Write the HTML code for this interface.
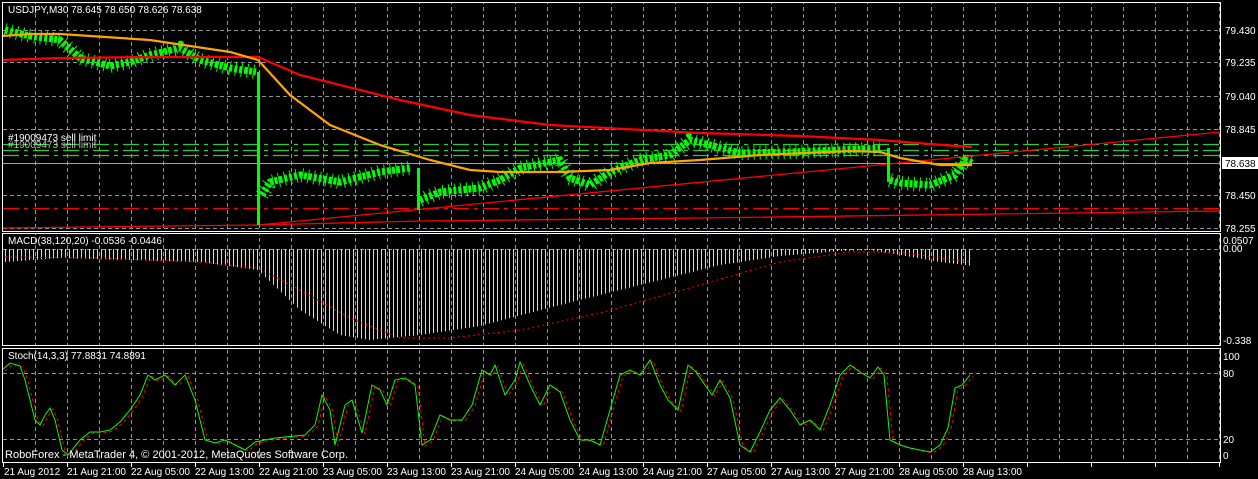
<!DOCTYPE html>
<html><head><meta charset="utf-8">
<style>
html,body{margin:0;padding:0;background:#000;width:1258px;height:479px;overflow:hidden}
svg{display:block}
text{font-family:"Liberation Sans",sans-serif;font-size:10px;fill:#fff}
</style></head>
<body>
<svg width="1258" height="479" xmlns="http://www.w3.org/2000/svg">
<defs>
<pattern id="vg" x="3" y="0" width="32" height="7" patternUnits="userSpaceOnUse">
<rect x="0" y="0" width="1" height="4" fill="#8a93a3"/>
</pattern>
<pattern id="tk" x="3" y="0" width="64" height="10" patternUnits="userSpaceOnUse">
<rect x="0" y="0" width="1" height="10" fill="#fff"/>
</pattern>
<pattern id="mb" x="5" y="0" width="4" height="10" patternUnits="userSpaceOnUse">
<rect x="0" y="0" width="1" height="10" fill="#d8d8d8"/>
</pattern>
</defs>
<rect x="4" y="3" width="1216" height="228" fill="url(#vg)"/>
<rect x="4" y="234" width="1216" height="112" fill="url(#vg)"/>
<rect x="4" y="349" width="1216" height="113" fill="url(#vg)"/>
<g stroke="#8a93a3" stroke-dasharray="4,3">
<line x1="3" y1="30.5" x2="1220" y2="30.5"/><line x1="3" y1="62.5" x2="1220" y2="62.5"/>
<line x1="3" y1="96.5" x2="1220" y2="96.5"/><line x1="3" y1="129.5" x2="1220" y2="129.5"/>
<line x1="3" y1="195.5" x2="1220" y2="195.5"/><line x1="3" y1="228.5" x2="1220" y2="228.5"/>
<line x1="3" y1="249.5" x2="1220" y2="249.5"/>
<line x1="3" y1="373.5" x2="1220" y2="373.5"/><line x1="3" y1="439.5" x2="1220" y2="439.5"/>
</g>
<line x1="3" y1="163.5" x2="1220" y2="163.5" stroke="#9aa3b3"/>
<g stroke="#2ecc2e" stroke-width="1.2" stroke-dasharray="16,5,4,5">
<line x1="3" y1="144.5" x2="1220" y2="144.5"/><line x1="3" y1="150.5" x2="1220" y2="150.5"/><line x1="3" y1="155.5" x2="1220" y2="155.5"/>
</g>
<line x1="3" y1="208.5" x2="1220" y2="208.5" stroke="#f00" stroke-width="1.3" stroke-dasharray="16,5,4,5"/>
<polyline fill="none" stroke="#f00" stroke-width="1.3" points="258,225 1220,132"/>
<polyline fill="none" stroke="#f00" stroke-width="1.3" points="2,228 258,225 420,221 700,218 1220,211"/>
<path fill="none" stroke="#00ff00" stroke-width="14" stroke-dasharray="1,5" d="M5 30L30 36L60 40L80 58L110 66L130 62L150 55L180 48L200 60L230 68L256 72M262 195L270 182L300 175L340 182L380 172L410 168M420 200L440 192L480 188L500 180L520 168L560 160L570 178L590 185L610 172L640 160L670 155L690 140L710 145L740 153L790 152L840 150L880 148M890 180L900 183L930 185L955 175L965 160L972 163"/>
<path fill="none" stroke="#00ff00" stroke-width="7" stroke-dasharray="3,2" d="M5 30L30 36L60 40L80 58L110 66L130 62L150 55L180 48L200 60L230 68L256 72M262 195L270 182L300 175L340 182L380 172L410 168M420 200L440 192L480 188L500 180L520 168L560 160L570 178L590 185L610 172L640 160L670 155L690 140L710 145L740 153L790 152L840 150L880 148M890 180L900 183L930 185L955 175L965 160L972 163"/>
<line x1="258.5" y1="72" x2="258.5" y2="225" stroke="#00ff00" stroke-width="3"/>
<line x1="888.5" y1="148" x2="888.5" y2="182" stroke="#00ff00" stroke-width="3"/>
<line x1="418.5" y1="168" x2="418.5" y2="210" stroke="#00ff00" stroke-width="3"/>
<polyline fill="none" stroke="#f00" stroke-width="2.2" points="2,60 60,58 150,57 258,57 300,75 400,100 470,115 550,125 700,133 800,136 880,140 930,144 972,147"/>
<polyline fill="none" stroke="#ffa500" stroke-width="2.2" points="2,36 30,34 60,34 150,40 230,52 258,60 290,95 330,125 380,145 430,160 470,170 500,172 560,172 610,170 650,163 700,160 760,155 850,151 880,152 900,158 940,165 972,165"/>
<polygon fill="url(#mb)" points="5,249 5,262 60,258 200,262 258,270 300,310 340,335 370,340 420,335 480,326 560,305 640,285 720,265 780,256 840,251 870,250 900,255 940,262 973,266 973,249"/>
<polyline fill="none" stroke="#f00" stroke-width="1" stroke-dasharray="2,3" points="5,257 100,258 200,262 258,268 300,290 350,318 400,338 450,338 520,330 600,313 700,285 780,262 850,252 900,252 940,258 972,262"/>
<polyline transform="translate(3,1)" fill="none" stroke="#f00" stroke-width="1" stroke-dasharray="3,3" points="2,370 10,363 20,366 25,380 35,420 40,425 45,415 50,408 55,420 62,450 68,455 80,440 90,432 100,432 110,430 120,422 130,410 140,395 148,375 155,380 165,375 175,385 185,375 195,400 205,440 215,443 225,440 235,445 245,450 255,442 265,440 275,438 285,437 305,435 315,425 322,395 330,410 335,445 345,405 352,400 362,433 372,385 380,390 387,405 395,380 405,378 415,385 422,445 430,440 440,415 450,420 462,420 472,405 482,370 490,375 495,365 505,395 515,380 520,362 530,385 540,405 550,385 560,392 570,420 580,440 590,440 600,445 610,410 620,375 630,370 640,375 650,360 660,385 668,400 678,410 688,365 696,372 705,385 712,395 720,380 730,398 740,445 750,452 760,432 770,410 780,398 790,410 800,425 810,420 820,430 830,405 840,375 850,365 860,372 870,378 878,367 884,375 890,440 900,445 910,448 920,450 930,452 940,445 948,428 955,388 962,385 970,375"/>
<polyline fill="none" stroke="#00ff00" stroke-width="1" points="2,370 10,363 20,366 25,380 35,420 40,425 45,415 50,408 55,420 62,450 68,455 80,440 90,432 100,432 110,430 120,422 130,410 140,395 148,375 155,380 165,375 175,385 185,375 195,400 205,440 215,443 225,440 235,445 245,450 255,442 265,440 275,438 285,437 305,435 315,425 322,395 330,410 335,445 345,405 352,400 362,433 372,385 380,390 387,405 395,380 405,378 415,385 422,445 430,440 440,415 450,420 462,420 472,405 482,370 490,375 495,365 505,395 515,380 520,362 530,385 540,405 550,385 560,392 570,420 580,440 590,440 600,445 610,410 620,375 630,370 640,375 650,360 660,385 668,400 678,410 688,365 696,372 705,385 712,395 720,380 730,398 740,445 750,452 760,432 770,410 780,398 790,410 800,425 810,420 820,430 830,405 840,375 850,365 860,372 870,378 878,367 884,375 890,440 900,445 910,448 920,450 930,452 940,445 948,428 955,388 962,385 970,375"/>
<g fill="none" stroke="#fff" stroke-width="1">
<rect x="2.5" y="2.5" width="1218" height="229"/>
<rect x="2.5" y="233.5" width="1218" height="112"/>
<rect x="2.5" y="348.5" width="1218" height="114"/>
</g>
<rect x="3" y="462" width="1217" height="5" fill="url(#tk)"/>
<text x="8" y="13">USDJPY,M30  78.645 78.650 78.626 78.638</text>
<text x="8" y="141">#19009473 sell limit</text>
<text x="8" y="148" opacity="0.7">#19009473 sell limit</text>
<text x="8" y="244">MACD(38,120,20) -0.0536 -0.0446</text>
<text x="8" y="359">Stoch(14,3,3) 77.8831 74.8891</text>
<text x="5" y="458" style="font-size:11px" textLength="343">RoboForex - MetaTrader 4, © 2001-2012, MetaQuotes Software Corp.</text>
<g>
<text x="1225" y="34">79.430</text><text x="1225" y="66">79.235</text><text x="1225" y="100">79.040</text>
<text x="1225" y="133">78.845</text><text x="1225" y="199">78.450</text><text x="1225" y="232">78.255</text>
<rect x="1222" y="157" width="36" height="12" fill="#fff"/>
<text x="1225" y="167" style="fill:#000">78.638</text>
<text x="1223" y="244">0.0507</text><text x="1223" y="252">0.00</text><text x="1223" y="344">-0.338</text>
<text x="1223" y="360">100</text><text x="1223" y="377">80</text><text x="1223" y="443">20</text><text x="1223" y="459">0</text>
</g>
<g>
<text x="4" y="475">21 Aug 2012</text><text x="67" y="475">21 Aug 21:00</text><text x="131" y="475">22 Aug 05:00</text>
<text x="195" y="475">22 Aug 13:00</text><text x="259" y="475">22 Aug 21:00</text><text x="323" y="475">23 Aug 05:00</text>
<text x="387" y="475">23 Aug 13:00</text><text x="451" y="475">23 Aug 21:00</text><text x="515" y="475">24 Aug 05:00</text>
<text x="579" y="475">24 Aug 13:00</text><text x="643" y="475">24 Aug 21:00</text><text x="707" y="475">27 Aug 05:00</text>
<text x="771" y="475">27 Aug 13:00</text><text x="835" y="475">27 Aug 21:00</text><text x="899" y="475">28 Aug 05:00</text>
<text x="963" y="475">28 Aug 13:00</text>
</g>
</svg>
</body></html>
